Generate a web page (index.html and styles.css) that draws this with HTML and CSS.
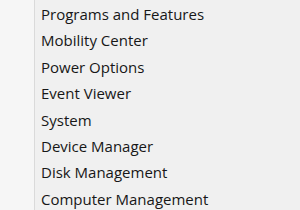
FILE: index.html
```html
<!DOCTYPE html>
<html lang="en">
<head>
    <meta charset="UTF-8">
    <title>Quick Link Menu</title>
    <link rel="stylesheet" href="styles.css">
</head>
<body>
    <div class="menu">
        <div class="gutter"></div>
        <ul class="items">
            <li>Programs and Features</li>
            <li>Mobility Center</li>
            <li>Power Options</li>
            <li>Event Viewer</li>
            <li>System</li>
            <li>Device Manager</li>
            <li>Disk Management</li>
            <li>Computer Management</li>
        </ul>
    </div>
</body>
</html>
```

FILE: styles.css
```css
html, body {
    margin: 0;
    height: 100%;
    background: #f0f0f0;
}
.menu {
    display: flex;
    height: 100%;
    font-family: "Open Sans", "Noto Sans", sans-serif;
    font-size: 15px;
    color: #171717;
}
.gutter {
    width: 34px;
    flex: none;
    background: #f6f6f6;
    border-right: 1px solid #dadada;
}
.items {
    list-style: none;
    margin: 0;
    padding: 1px 0 0 6px;
    flex: 1;
}
.items li {
    height: 26.4px;
    line-height: 26.4px;
    white-space: nowrap;
}
```
